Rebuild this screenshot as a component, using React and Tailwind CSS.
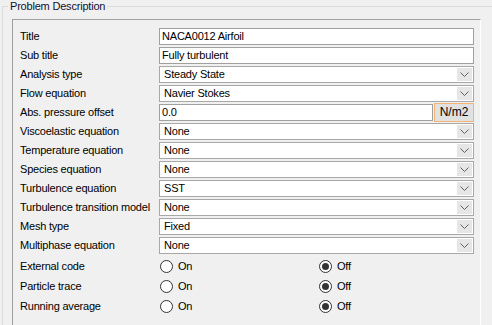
import React from "react";

const rows = [
  { label: "Title", type: "text", value: "NACA0012 Airfoil" },
  { label: "Sub title", type: "text", value: "Fully turbulent" },
  { label: "Analysis type", type: "select", value: "Steady State" },
  { label: "Flow equation", type: "select", value: "Navier Stokes" },
  { label: "Abs. pressure offset", type: "unit", value: "0.0", unit: "N/m2" },
  { label: "Viscoelastic equation", type: "select", value: "None" },
  { label: "Temperature equation", type: "select", value: "None" },
  { label: "Species equation", type: "select", value: "None" },
  { label: "Turbulence equation", type: "select", value: "SST" },
  { label: "Turbulence transition model", type: "select", value: "None" },
  { label: "Mesh type", type: "select", value: "Fixed" },
  { label: "Multiphase equation", type: "select", value: "None" },
  { label: "External code", type: "radio" },
  { label: "Particle trace", type: "radio" },
  { label: "Running average", type: "radio" },
];

function Chevron() {
  return (
    <svg width="9" height="5" viewBox="0 0 9 5" className="block">
      <path d="M0.5 0.5 L4.5 4.5 L8.5 0.5" fill="none" stroke="#606060" strokeWidth="1" />
    </svg>
  );
}

function Radio({ checked, label }) {
  return (
    <div className="flex items-center gap-[5px]">
      <span className="w-[13px] h-[13px] rounded-full border border-[#333] bg-white flex items-center justify-center">
        {checked && <span className="w-[7px] h-[7px] rounded-full bg-[#333]" />}
      </span>
      <span>{label}</span>
    </div>
  );
}

function Field({ row }) {
  if (row.type === "text") {
    return (
      <div className="h-[17px] border border-[#a0a0a0] bg-white pl-[2px] flex items-center">
        {row.value}
      </div>
    );
  }
  if (row.type === "unit") {
    return (
      <div className="h-[19px] flex items-stretch">
        <div className="flex-1 my-[1px] border border-[#a0a0a0] bg-white pl-[2px] flex items-center">
          {row.value}
        </div>
        <div className="w-[40px] ml-[1px] border border-[#f3b474] bg-[#e1e1e1] flex items-center justify-center text-[12px] tracking-normal">
          {row.unit}
        </div>
      </div>
    );
  }
  if (row.type === "radio") {
    return (
      <div className="flex items-center pl-[1px]">
        <div className="w-[159px]">
          <Radio label="On" />
        </div>
        <Radio checked label="Off" />
      </div>
    );
  }
  return (
    <div className="h-[17px] border border-[#a8a8a8] bg-white flex items-stretch">
      <div className="flex-1 pl-[4px] flex items-center">{row.value}</div>
      <div className="w-[15px] m-[1px] bg-[#e6e6e6] flex items-center justify-center">
        <Chevron />
      </div>
    </div>
  );
}

export default function App() {
  return (
    <div
      className="w-[492px] h-[325px] overflow-hidden bg-[#f0f0f0] text-[11px] leading-[13px] tracking-[-0.2px] text-black"
      style={{ fontFamily: '"Liberation Sans", Arial, sans-serif' }}
    >
      <fieldset className="ml-[2px] h-[340px] border border-[#dcdcdc] border-r-0">
        <legend className="ml-[5px] px-[2px] text-[#101030]">Problem Description</legend>
        <div className="ml-[9px] mt-[6px] w-[469px] h-[320px] border-t border-l border-[#a0a0a0] border-r border-r-white pt-[7px] pl-[7px]">
          {rows.map((row) => (
            <div
              key={row.label}
              className={`flex items-center ${row.type === "radio" ? "h-[20px]" : "h-[19px]"} ${row.label === "External code" ? "mt-[1px]" : ""}`}
            >
              <div className="w-[139px] shrink-0">{row.label}</div>
              <div className="w-[315px]">
                <Field row={row} />
              </div>
            </div>
          ))}
        </div>
      </fieldset>
    </div>
  );
}
